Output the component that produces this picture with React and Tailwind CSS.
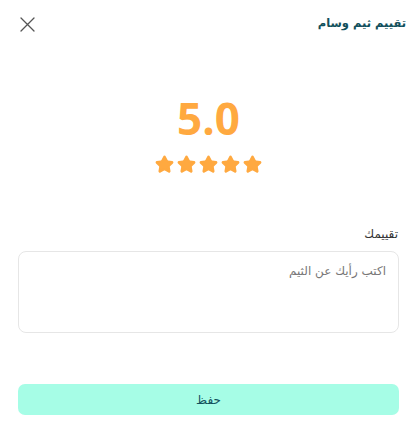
import { Star } from 'lucide-react';

export default function App() {
  return (
    <div dir="rtl" className="w-[417px] h-[426px] bg-white pt-[14px]" style={{ fontFamily: "'DejaVu Sans', 'Noto Sans', sans-serif" }}>
      {/* Header */}
      <div className="flex items-center justify-between h-[20px] pr-[11px] pl-[20px]">
        <h2 className="text-[11.5px] font-bold text-[#12505c]">تقييم ثيم وسام</h2>
        <button className="text-[#555]">
          <svg width="15" height="15" viewBox="0 0 15 15" fill="none" stroke="currentColor" strokeWidth="1.3" strokeLinecap="round">
            <path d="M1 1l13 13M14 1L1 14" />
          </svg>
        </button>
      </div>

      {/* Rating */}
      <div className="flex flex-col items-center mt-[62px]">
        <div className="text-[44px] leading-[44px] font-bold text-[#ffa940]" style={{ fontFamily: "'Open Sans', sans-serif" }}>
          5.0
        </div>
        <div className="flex gap-[3px] mt-[15px]" dir="ltr">
          {[0, 1, 2, 3, 4].map((i) => (
            <Star key={i} className="w-[19px] h-[19px] text-[#ffa940]" fill="currentColor" strokeWidth={2.5} />
          ))}
        </div>
      </div>

      {/* Comment */}
      <div className="mt-[51px] px-[18px]">
        <label className="block text-[12px] text-[#333] pr-[1px] mb-[8px]">تقييمك</label>
        <textarea
          placeholder="اكتب رأيك عن الثيم"
          className="w-full h-[82px] rounded-[8px] border border-[#e6e6e6] px-[12px] py-[10px] text-[12px] text-[#333] placeholder:text-[#777] resize-none outline-none"
        />
      </div>

      {/* Save */}
      <div className="px-[18px] mt-[44px]">
        <button className="w-full h-[31px] rounded-[7px] bg-[#a6fde6] text-[12px] text-[#12505c]">
          حفظ
        </button>
      </div>
    </div>
  );
}
